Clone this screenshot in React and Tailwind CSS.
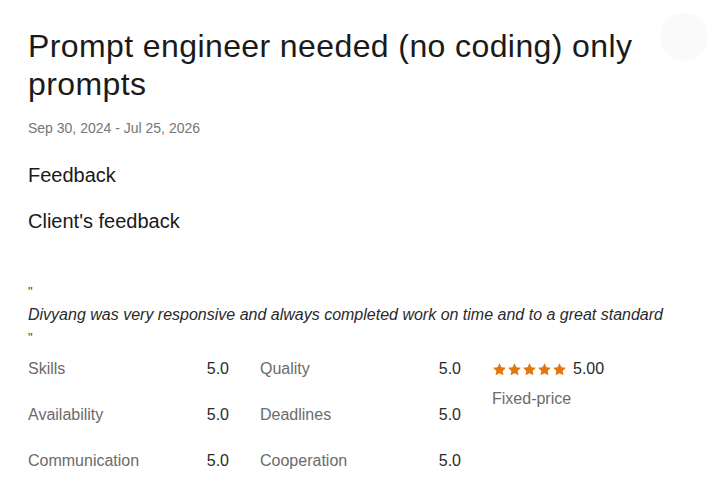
import React from "react";

const Star = () => (
  <svg viewBox="0 0 24 24" className="w-[15px] h-[15px]" fill="#e0770f">
    <path d="M12 1.8l3.1 6.6 7.1.9-5.2 4.9 1.4 7.1L12 17.8l-6.4 3.5 1.4-7.1-5.2-4.9 7.1-.9z" />
  </svg>
);

const Row = ({ label, value }) => (
  <div className="flex justify-between items-center h-[22px]">
    <span className="text-[#6b6b6b]">{label}</span>
    <span className="text-[#2a2a2a]">{value}</span>
  </div>
);

export default function App() {
  return (
    <div
      className="relative w-[720px] h-[496px] bg-white overflow-hidden"
      style={{ fontFamily: '"Liberation Sans", Arial, sans-serif' }}
    >
      <div className="absolute left-[660px] top-[13px] w-[48px] h-[48px] rounded-full bg-[#fafafa]" />
      <div className="px-[28px] pt-[27px]">
        <h1 className="text-[32px] leading-[38px] tracking-[0.4px] text-[#1a1a1a] pr-[50px]">
          Prompt engineer needed (no coding) only prompts
        </h1>
        <div className="mt-[15px] text-[14px] leading-[20px] text-[#767676]">
          Sep 30, 2024 - Jul 25, 2026
        </div>
        <div className="mt-[24px] text-[20px] leading-[26px] text-[#1a1a1a]">Feedback</div>
        <div className="mt-[20px] text-[20px] leading-[26px] text-[#1a1a1a]">
          Client's feedback
        </div>
        <div className="mt-[46px] text-[16px] leading-[23px] text-[#2a2a2a]">
          <div className="text-[13px] text-[#444]">"</div>
          <div className="italic">
            Divyang was very responsive and always completed work on time and to a great standard
          </div>
          <div className="text-[13px] text-[#444]">"</div>
        </div>
        <div className="mt-[9px] flex gap-[31px] text-[16px]">
          <div className="w-[201px] flex flex-col gap-[24px]">
            <Row label="Skills" value="5.0" />
            <Row label="Availability" value="5.0" />
            <Row label="Communication" value="5.0" />
          </div>
          <div className="w-[201px] flex flex-col gap-[24px]">
            <Row label="Quality" value="5.0" />
            <Row label="Deadlines" value="5.0" />
            <Row label="Cooperation" value="5.0" />
          </div>
          <div className="flex flex-col">
            <div className="flex items-center h-[22px]">
              <div className="flex">
                <Star />
                <Star />
                <Star />
                <Star />
                <Star />
              </div>
              <span className="ml-[6px] text-[#2a2a2a]">5.00</span>
            </div>
            <div className="mt-[8px] leading-[22px] text-[#6b6b6b]">Fixed-price</div>
          </div>
        </div>
      </div>
    </div>
  );
}
